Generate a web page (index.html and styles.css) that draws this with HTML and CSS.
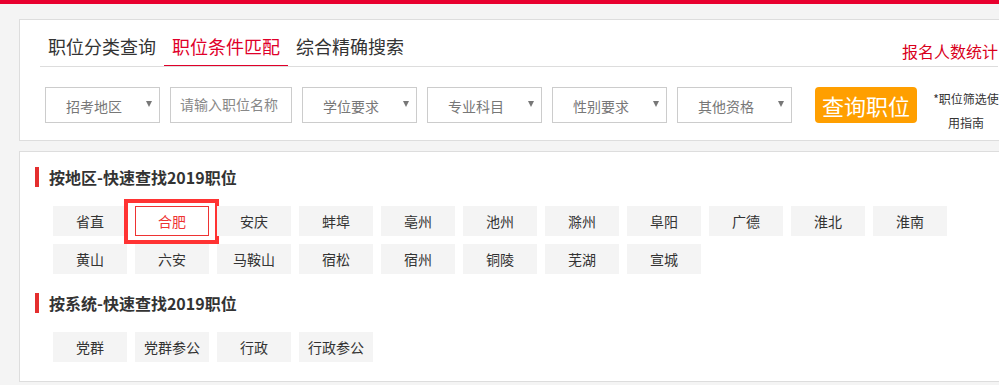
FILE: index.html
```html
<!DOCTYPE html>
<html lang="zh-CN">
<head>
    <meta charset="UTF-8">
    <meta name="viewport" content="width=device-width, initial-scale=1.0">
    <title>职位条件匹配</title>
    <link rel="stylesheet" href="styles.css">
</head>
<body>
    <div class="topbar"></div>

    <div class="panel search-panel">
        <div class="tabs">
            <a class="tab">职位分类查询</a>
            <a class="tab active">职位条件匹配</a>
            <a class="tab">综合精确搜索</a>
            <a class="stat-link">报名人数统计</a>
        </div>

        <div class="filters">
            <div class="select"><span>招考地区</span><i class="arrow"></i></div>
            <input class="name-input" type="text" placeholder="请输入职位名称">
            <div class="select"><span>学位要求</span><i class="arrow"></i></div>
            <div class="select"><span>专业科目</span><i class="arrow"></i></div>
            <div class="select"><span>性别要求</span><i class="arrow"></i></div>
            <div class="select"><span>其他资格</span><i class="arrow"></i></div>
            <button class="search-btn">查询职位</button>
            <a class="guide">*职位筛选使用指南</a>
        </div>
    </div>

    <div class="panel quick-panel">
        <h3 class="section-title">按地区-快速查找2019职位</h3>
        <div class="tag-list">
            <a class="tag">省直</a>
            <a class="tag selected">合肥</a>
            <a class="tag">安庆</a>
            <a class="tag">蚌埠</a>
            <a class="tag">亳州</a>
            <a class="tag">池州</a>
            <a class="tag">滁州</a>
            <a class="tag">阜阳</a>
            <a class="tag">广德</a>
            <a class="tag">淮北</a>
            <a class="tag">淮南</a>
            <a class="tag">黄山</a>
            <a class="tag">六安</a>
            <a class="tag">马鞍山</a>
            <a class="tag">宿松</a>
            <a class="tag">宿州</a>
            <a class="tag">铜陵</a>
            <a class="tag">芜湖</a>
            <a class="tag">宣城</a>
        </div>

        <h3 class="section-title">按系统-快速查找2019职位</h3>
        <div class="tag-list">
            <a class="tag">党群</a>
            <a class="tag">党群参公</a>
            <a class="tag">行政</a>
            <a class="tag">行政参公</a>
        </div>
    </div>
</body>
</html>
```

FILE: styles.css
```css
body {
    margin: 0;
    background-color: #f4f4f4;
    font-family: "Noto Sans CJK SC", "Liberation Sans", sans-serif;
    color: #333;
    overflow: hidden;
}
.topbar {
    height: 4px;
    background-color: #e8002e;
    margin-bottom: 15px;
}
.panel {
    width: 1000px;
    margin-left: 19px;
    background-color: #fff;
    border: 1px solid #ddd;
    box-sizing: border-box;
}
.quick-panel {
    margin-top: 10px;
    padding: 15px 0 0;
}

/* tabs */
.tabs {
    display: flex;
    margin: 0 20px;
    border-bottom: 1px solid #ddd;
}
.tab {
    padding: 10px 8px 3px;
    font-size: 18px;
    line-height: 32px;
    color: #333;
    border-bottom: 1px solid transparent;
    cursor: pointer;
}
.tab.active {
    color: #e0002a;
    border-bottom-color: #e0002a;
}
.stat-link {
    margin-left: auto;
    align-self: flex-end;
    font-size: 16px;
    line-height: 18px;
    padding-bottom: 6px;
    color: #d9001b;
    cursor: pointer;
}

/* filter row */
.filters {
    display: flex;
    align-items: flex-start;
    padding: 20px 0 0 25px;
    height: 53px;
}
.select, .name-input {
    height: 36px;
    border: 1px solid #ccc;
    box-sizing: border-box;
    margin-right: 10px;
    font-family: inherit;
    font-size: 14px;
}
.select {
    width: 115px;
    display: flex;
    align-items: center;
    padding: 0 7px 0 20px;
    color: #777;
    cursor: pointer;
}
.select span {
    flex: 1;
    line-height: 20px;
    padding-top: 1px;
}
.arrow {
    width: 0;
    height: 0;
    border-left: 3px solid transparent;
    border-right: 3px solid transparent;
    border-top: 6px solid #777;
    margin-top: -2px;
}
.name-input {
    width: 122px;
    padding: 0 0 3px 9px;
    color: #333;
    outline: none;
}
.name-input::placeholder {
    color: #888;
}
.search-btn {
    margin-left: 13px;
    width: 102px;
    height: 36px;
    background-color: #ff9f00;
    color: #fff;
    border: none;
    border-radius: 4px;
    font-family: inherit;
    font-size: 22px;
    line-height: 36px;
    padding: 0;
    cursor: pointer;
}
.guide {
    width: 72px;
    margin-left: 13px;
    font-size: 12px;
    line-height: 24px;
    text-align: center;
    color: #333;
    cursor: pointer;
}

/* quick search */
.section-title {
    margin: 0 0 0 15px;
    padding-left: 10px;
    border-left: 4px solid #e42e2e;
    font-size: 16px;
    font-weight: bold;
    line-height: 20px;
    color: #333;
}
.tag-list {
    display: flex;
    flex-wrap: wrap;
    gap: 8px;
    width: 900px;
    margin: 19px 0 19px 33px;
}
.tag {
    position: relative;
    width: 74px;
    height: 30px;
    line-height: 30px;
    text-align: center;
    font-size: 14px;
    background-color: #f4f4f4;
    color: #333;
    box-sizing: border-box;
    cursor: pointer;
}
.tag.selected {
    background-color: #fff;
    border: 1px solid #e33;
    line-height: 28px;
    color: #e33;
}
.tag.selected::after {
    content: "";
    position: absolute;
    top: -8px;
    left: -12px;
    right: -11px;
    bottom: -9px;
    border: 4px solid #f33;
}
```
